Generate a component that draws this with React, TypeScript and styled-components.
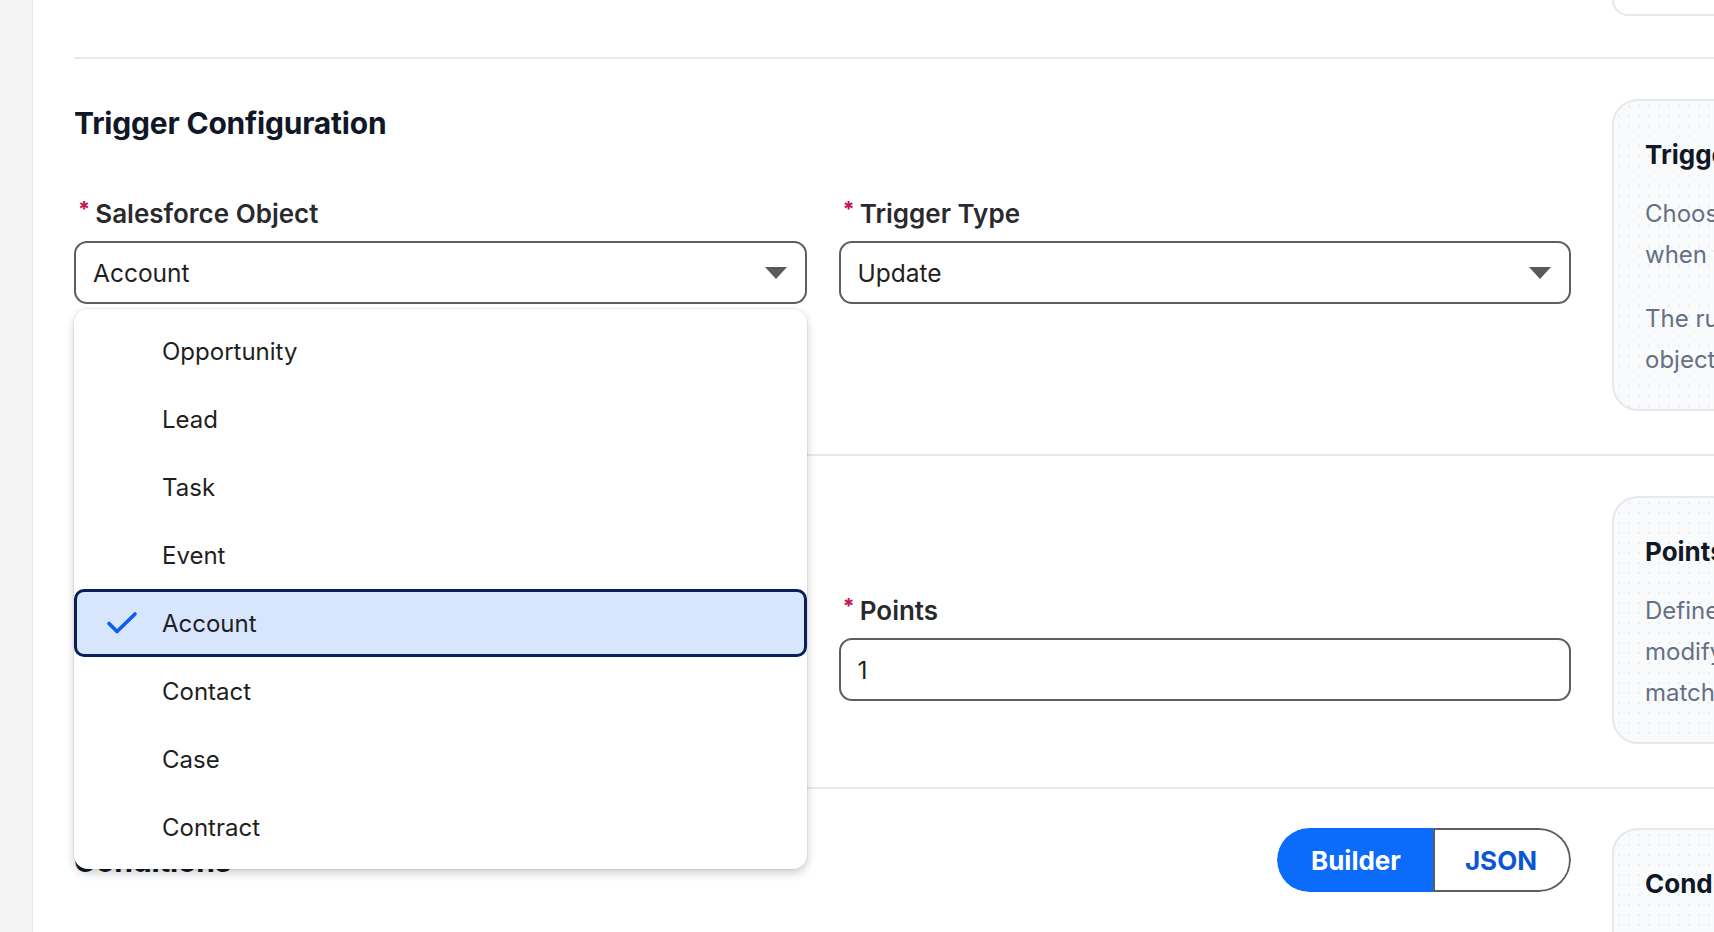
import React from "react";
import styled, { createGlobalStyle } from "styled-components";

const GlobalStyle = createGlobalStyle`
  html, body { margin: 0; padding: 0; }
  body {
    background: #ffffff;
    font-family: Inter, "Noto Sans", "Liberation Sans", sans-serif;
    overflow: hidden;
    width: 1714px;
    height: 932px;
  }
  * { box-sizing: border-box; }
`;

const Page = styled.div`
  display: flex;
  height: 932px;
  overflow: hidden;
`;

const Sidebar = styled.div`
  flex: 0 0 33px;
  background: #f4f4f5;
  border-right: 1px solid #e7e7ea;
`;

const Main = styled.main`
  flex: 1;
  min-width: 0;
  padding-left: 41px;
  overflow: hidden;
`;

const Section = styled.section<{ $first?: boolean; $tight?: boolean }>`
  display: grid;
  grid-template-columns: 1497px 600px;
  column-gap: 41px;
  padding: ${(p) => (p.$first ? "0 0 41px" : p.$tight ? "39px 0 43px" : "40px 0 43px")};
  border-top: ${(p) => (p.$first ? "none" : "2px solid #e7e8ec")};
  width: 2140px;
`;

const MainCol = styled.div`
  display: flex;
  flex-direction: column;
`;

const Heading = styled.h2`
  margin: 2px 0 0;
  font-size: 30px;
  line-height: 44px;
  font-weight: 700;
  color: #101828;
  letter-spacing: -0.2px;
`;

const FieldRow = styled.div`
  display: grid;
  grid-template-columns: 1fr 1fr;
  column-gap: 32px;
  margin-top: 53px;
`;

const Field = styled.div`
  position: relative;
  display: flex;
  flex-direction: column;
  gap: 11px;
`;

const Label = styled.label`
  display: flex;
  align-items: center;
  font-size: 26px;
  line-height: 32px;
  font-weight: 600;
  color: #2a2a2e;
  padding-left: 4px;
`;

const Required = styled.span`
  color: #c2185b;
  font-size: 21px;
  font-weight: 800;
  margin-right: 5px;
  position: relative;
  top: -4px;
`;

const SelectBox = styled.div`
  height: 63px;
  border: 2px solid #5e5e62;
  border-radius: 13px;
  display: flex;
  align-items: center;
  justify-content: space-between;
  padding: 0 18px 0 17px;
  font-size: 24.5px;
  color: #1f1f22;
  background: #fff;
`;

const Caret = styled.span`
  width: 0;
  height: 0;
  border-left: 11px solid transparent;
  border-right: 11px solid transparent;
  border-top: 12px solid #5a5a5e;
`;

const InputBox = styled.div`
  height: 63px;
  border: 2px solid #5e5e62;
  border-radius: 13px;
  display: flex;
  align-items: center;
  padding: 0 17px;
  font-size: 24.5px;
  color: #1f1f22;
  background: #fff;
`;

const Menu = styled.ul`
  position: absolute;
  top: 111px;
  left: 0;
  right: 0;
  margin: 0;
  padding: 8px 0;
  list-style: none;
  background: #fff;
  border-radius: 14px;
  box-shadow: 0 0 0 1px rgba(0, 0, 0, 0.05), 0 4px 10px rgba(0, 0, 0, 0.2);
  z-index: 10;
`;

const Option = styled.li<{ $selected?: boolean }>`
  height: 68px;
  display: flex;
  align-items: center;
  position: relative;
  font-size: 24px;
  color: #1f1f22;
  background: ${(p) => (p.$selected ? "#d7e5fd" : "transparent")};
  border: ${(p) => (p.$selected ? "3px solid #0a1f5a" : "3px solid transparent")};
  border-radius: ${(p) => (p.$selected ? "10px" : "0")};
  padding-left: 85px;
`;

const Check = styled.svg`
  position: absolute;
  left: 29px;
  top: 50%;
  transform: translateY(-50%);
`;

const HeadRow = styled.div`
  display: flex;
  align-items: center;
  justify-content: space-between;
  height: 64px;
`;

const Toggle = styled.div`
  display: flex;
  height: 64px;
  border-radius: 32px;
  overflow: hidden;
`;

const ToggleBtn = styled.button`
  margin: 0;
  font-family: inherit;
  font-size: 26px;
  font-weight: 700;
  padding: 0 32px 0 30px;
  background: #ffffff;
  color: #0b56d4;
  border: 2px solid #5e5e62;
  border-radius: 0 32px 32px 0;
`;

const ActiveBtn = styled(ToggleBtn)`
  padding: 0 32px 0 34px;
  background: #0b6bfb;
  color: #ffffff;
  border: none;
  border-radius: 32px 0 0 32px;
`;

const Card = styled.aside`
  border: 2px solid #e6e8ec;
  border-radius: 26px;
  background-color: #f9fafb;
  background-image: radial-gradient(#eceef1 1px, transparent 1px);
  background-size: 10px 10px;
  padding: 33px 31px 29px;
  align-self: start;
  white-space: nowrap;
`;

const StubCard = styled.div`
  grid-column: 2;
  height: 16px;
  border: 2px solid #e6e8ec;
  border-top: none;
  border-radius: 0 0 26px 26px;
  background: #ffffff;
`;

const CardTitle = styled.h3`
  margin: 0;
  font-size: 26px;
  line-height: 42px;
  font-weight: 700;
  color: #101828;
`;

const CardText = styled.p`
  margin: 17px 0 0;
  font-size: 24px;
  line-height: 41px;
  color: #667085;
  & + & { margin-top: 23px; }
`;

const options = ["Opportunity", "Lead", "Task", "Event", "Account", "Contact", "Case", "Contract"];

export default function App() {
  return (
    <>
      <GlobalStyle />
      <Page>
        <Sidebar />
        <Main>
          <Section $first>
            <div />
            <StubCard />
          </Section>

          <Section>
            <MainCol>
              <Heading>Trigger Configuration</Heading>
              <FieldRow>
                <Field>
                  <Label>
                    <Required>*</Required>Salesforce Object
                  </Label>
                  <SelectBox>
                    <span>Account</span>
                    <Caret />
                  </SelectBox>
                  <Menu>
                    {options.map((o) => (
                      <Option key={o} $selected={o === "Account"}>
                        {o === "Account" && (
                          <Check width="32" height="24" viewBox="0 0 32 24" fill="none">
                            <path d="M3 12.5 L11 20.5 L29 3" stroke="#0b5cf0" strokeWidth="3.6" strokeLinecap="round" strokeLinejoin="round" />
                          </Check>
                        )}
                        {o}
                      </Option>
                    ))}
                  </Menu>
                </Field>
                <Field>
                  <Label>
                    <Required>*</Required>Trigger Type
                  </Label>
                  <SelectBox>
                    <span>Update</span>
                    <Caret />
                  </SelectBox>
                </Field>
              </FieldRow>
            </MainCol>
            <Card>
              <CardTitle>Trigger</CardTitle>
              <CardText>
                Choose the Salesforce object and event
                <br />
                when this rule should be evaluated.
              </CardText>
              <CardText>
                The rule runs for every record of this
                <br />
                object that matches the trigger type.
              </CardText>
            </Card>
          </Section>

          <Section>
            <MainCol>
              <Heading>Points Configuration</Heading>
              <FieldRow>
                <Field>
                  <Label>
                    <Required>*</Required>Operation
                  </Label>
                  <SelectBox>
                    <span>Add</span>
                    <Caret />
                  </SelectBox>
                </Field>
                <Field>
                  <Label>
                    <Required>*</Required>Points
                  </Label>
                  <InputBox>1</InputBox>
                </Field>
              </FieldRow>
            </MainCol>
            <Card>
              <CardTitle>Points</CardTitle>
              <CardText>
                Define how many points to add or
                <br />
                modify when a record
                <br />
                matches this rule.
              </CardText>
            </Card>
          </Section>

          <Section $tight>
            <MainCol>
              <HeadRow>
                <Heading>Conditions</Heading>
                <Toggle>
                  <ActiveBtn>Builder</ActiveBtn>
                  <ToggleBtn>JSON</ToggleBtn>
                </Toggle>
              </HeadRow>
            </MainCol>
            <Card>
              <CardTitle>Conditions</CardTitle>
              <CardText>Use filters to narrow which records match.</CardText>
            </Card>
          </Section>
        </Main>
      </Page>
    </>
  );
}
